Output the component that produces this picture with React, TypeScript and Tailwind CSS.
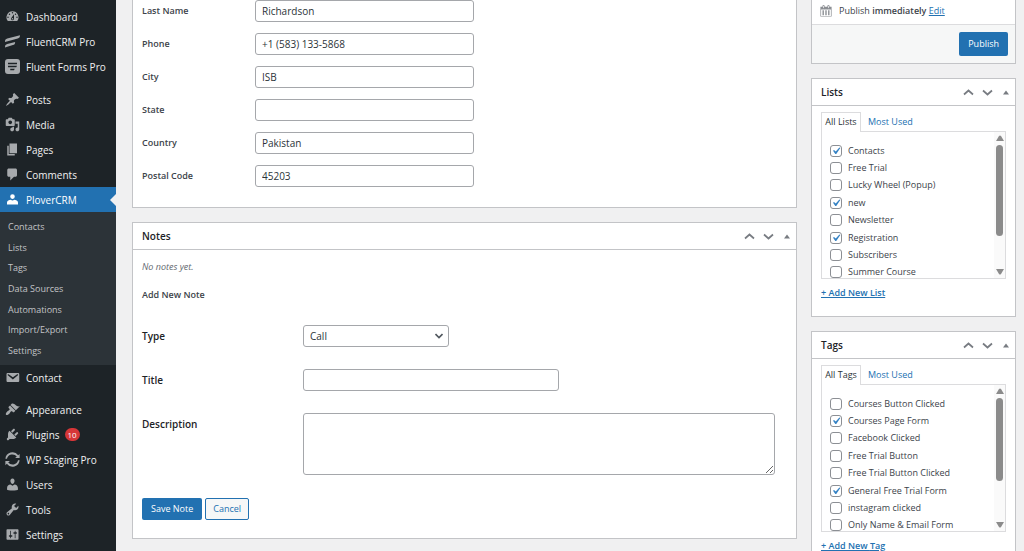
import React, { useState } from 'react';

const icons = {
  dashboard:
    'M3.76 16h12.48A7.998 7.998 0 0 0 10 3a7.998 7.998 0 0 0-6.24 13zM10 4c.55 0 1 .45 1 1s-.45 1-1 1-1-.45-1-1 .45-1 1-1zM6 6c.55 0 1 .45 1 1s-.45 1-1 1-1-.45-1-1 .45-1 1-1zm8 0c.55 0 1 .45 1 1s-.45 1-1 1-1-.45-1-1 .45-1 1-1zm-5.37 5.55L12 7v6c0 1.1-.9 2-2 2s-2-.9-2-2c0-.57.24-1.08.63-1.45zM4 10c.55 0 1 .45 1 1s-.45 1-1 1-1-.45-1-1 .45-1 1-1zm12 0c.55 0 1 .45 1 1s-.45 1-1 1-1-.45-1-1 .45-1 1-1zm-5 3c0-.55-.45-1-1-1s-1 .45-1 1 .45 1 1 1 1-.45 1-1z',
  fluentCrm: 'M0 10C0 7.6 1 6.6 3 6L20 1.5c0 2.600-1 3.800-3 4.400L0 10.500zM0 17.500c0-2.500 1-3.500 3-4.100L13.500 10.500c0 2.600-1 3.700-3 4.300L0 18z',
  fluentForms:
    'M4 0h12a4 4 0 0 1 4 4v12a4 4 0 0 1-4 4H4a4 4 0 0 1-4-4V4a4 4 0 0 1 4-4zM4 5v2h12V5zM4 9v2h11l1-2zM7 13v2h5l1-2z',
  posts:
    'M10.44 3.02l1.82-1.82 6.36 6.35-1.83 1.82c-1.05-.68-2.48-.57-3.41.36l-.75.75c-.92.93-1.04 2.35-.35 3.41l-1.83 1.82-2.41-2.41-2.8 2.79c-.42.42-3.38 2.71-3.8 2.29s1.86-3.39 2.28-3.81l2.79-2.79L4.1 9.36l1.83-1.82c1.05.69 2.48.57 3.4-.36l.75-.75c.93-.92 1.05-2.35.36-3.41z',
  media:
    'M13 11V4c0-.55-.45-1-1-1h-1.670L9 1H5L3.670 3H2c-.55 0-1 .45-1 1v7c0 .55.45 1 1 1h10c.55 0 1-.45 1-1zM7 4.500c1.380 0 2.500 1.120 2.500 2.500S8.380 9.500 7 9.500 4.500 8.380 4.500 7 5.620 4.500 7 4.500zM14 6h5v10.500c0 1.380-1.120 2.500-2.500 2.500S14 17.880 14 16.500s1.120-2.500 2.500-2.500c.17 0 .34.02.5.05V9h-3V6zm-4 8.050V13h2v3.500c0 1.380-1.120 2.500-2.500 2.500S7 17.880 7 16.500 8.120 14 9.500 14c.17 0 .34.02.5.05z',
  pages: 'M6 15V2h10v13H6zm-1 1h8v2H3V5h2v11z',
  comments: 'M5 2h9c1.100 0 2 .9 2 2v7c0 1.100-.9 2-2 2h-2l-5 5v-5H5c-1.100 0-2-.9-2-2V4c0-1.100.9-2 2-2z',
  plover: 'M10 0.500a4.200 4.200 0 1 1 0 8.400 4.200 4.200 0 0 1 0-8.400zM0 19v-3.500C0 12 4 10.500 7 10.500c.8.8 1.800 1.100 3 1.100s2.200-.3 3-1.100c3 0 7 1.500 7 5V19z',
  contact:
    'M3.870 4h13.250C18.370 4 19 4.590 19 5.790v8.420c0 1.190-.63 1.790-1.880 1.790H3.870c-1.250 0-1.880-.6-1.880-1.790V5.790c0-1.200.63-1.790 1.880-1.790zm6.620 8.600l6.740-5.530c.24-.2.43-.66.13-1.070-.29-.41-.82-.42-1.170-.17l-5.700 3.860L4.800 5.830c-.35-.25-.88-.24-1.170.17-.3.41-.11.87.13 1.070z',
  appearance:
    'M14.480 11.060L7.410 3.990l1.500-1.500c.5-.56 2.300-.47 3.510.32 1.210.8 1.430 1.280 2.910 2.100 1.180.64 2.450 1.260 4.450.85zm-.71.71L6.700 4.700 4.930 6.470c-.39.39-.39 1.020 0 1.410l1.060 1.060c.39.39.39 1.030 0 1.420-.6.6-1.430 1.110-2.210 1.690-.35.26-.7.53-1.010.84C1.430 14.230.4 16.080 1.400 17.070c.99 1 2.840-.03 4.180-1.360.31-.31.58-.66.85-1.020.57-.78 1.080-1.610 1.690-2.210.39-.39 1.020-.39 1.410 0l1.060 1.060c.39.39 1.020.39 1.410 0z',
  plugins:
    'M13.110 4.360L9.870 7.600 8 5.730l3.240-3.240c.35-.34 1.050-.2 1.560.32.52.51.66 1.210.31 1.550zm-8 1.770l.91-1.120 9.010 9.010-1.190.84c-.71.71-2.630 1.160-3.820 1.160H6.140L4.900 17.260c-.59.59-1.540.59-2.120 0-.59-.58-.59-1.530 0-2.120l1.240-1.240v-3.880c0-1.130.4-3.190 1.090-3.890zm7.260 3.970l3.240-3.240c.34-.35 1.040-.21 1.550.31.52.51.66 1.210.31 1.550l-3.240 3.250z',
  staging:
    'M0.500 9A9.500 9.500 0 0 1 17.600 4.200L19.500 2.500V8h-6l2.200-2A7.500 7.500 0 0 0 2.600 9zM19.500 11A9.500 9.500 0 0 1 2.400 15.800L.5 17.500V12h6l-2.200 2A7.500 7.500 0 0 0 17.400 11z',
  users:
    'M10 9.250c-2.270 0-2.730-3.440-2.730-3.440C7 4.020 7.820 2 9.970 2c2.160 0 2.980 2.020 2.710 3.810 0 0-.41 3.440-2.680 3.440zm0 2.570L12.720 10c2.390 0 4.520 2.330 4.520 4.530v2.490s-3.650 1.130-7.240 1.130c-3.650 0-7.240-1.130-7.240-1.130v-2.490c0-2.250 1.940-4.480 4.470-4.480z',
  tools:
    'M16.680 9.770c-1.340 1.340-3.300 1.670-4.950.99l-5.410 6.520c-.99.99-2.590.99-3.580 0s-.99-2.590 0-3.570l6.520-5.420c-.68-1.650-.35-3.610.99-4.950 1.280-1.280 3.120-1.620 4.720-1.060l-2.890 2.890 2.820 2.820 2.860-2.870c.53 1.580.18 3.390-1.080 4.650zM3.810 16.210c.4.39 1.040.39 1.430 0 .4-.4.4-1.040 0-1.430-.39-.4-1.030-.4-1.430 0-.39.39-.39 1.030 0 1.430z',
  settings:
    'M18 16V4c0-.55-.45-1-1-1H3c-.55 0-1 .45-1 1v12c0 .55.45 1 1 1h14c.55 0 1-.45 1-1zM8 11h1c.55 0 1 .45 1 1s-.45 1-1 1H8v1.500c0 .28-.22.5-.5.5s-.5-.22-.5-.5V13H6c-.55 0-1-.45-1-1s.45-1 1-1h1V5.500c0-.28.22-.5.5-.5s.5.22.5.5V11zm5-2h-1c-.55 0-1-.45-1-1s.45-1 1-1h1V5.500c0-.28.22-.5.5-.5s.5.22.5.5V7h1c.55 0 1 .45 1 1s-.45 1-1 1h-1v5.500c0 .28-.22.5-.5.5s-.5-.22-.5-.5V9z',
  calendar:
    'M15 4h3v14H2V4h3V3c0-.83.67-1.500 1.500-1.500S8 2.170 8 3v1h4V3c0-.83.67-1.500 1.500-1.500S15 2.170 15 3v1zM6 3v2.500c0 .28.22.5.5.5s.5-.22.5-.5V3c0-.28-.22-.5-.5-.5S6 2.720 6 3zm7 0v2.500c0 .28.22.5.5.5s.5-.22.5-.5V3c0-.28-.22-.5-.5-.5s-.5.22-.5.5zm4 14V8H3v9h14zM7 16V9H5v7h2zm4 0V9H9v7h2zm4 0V9h-2v7h2z',
  check: 'M14.830 4.890l1.340.94-5.810 8.380H9.020L5.780 9.670l1.340-1.250 2.570 2.400z',
};

type IconName = keyof typeof icons;

const Icon = ({ name, className }: { name: IconName; className?: string }) => (
  <svg viewBox="0 0 20 20" fill="currentColor" fillRule="evenodd" aria-hidden="true" className={className}>
    <path d={icons[name]} />
  </svg>
);

type MenuEntry = { label: string; icon: IconName; badge?: string };

const topMenu: MenuEntry[] = [
  { label: 'Dashboard', icon: 'dashboard' },
  { label: 'FluentCRM Pro', icon: 'fluentCrm' },
  { label: 'Fluent Forms Pro', icon: 'fluentForms' },
];

const contentMenu: MenuEntry[] = [
  { label: 'Posts', icon: 'posts' },
  { label: 'Media', icon: 'media' },
  { label: 'Pages', icon: 'pages' },
  { label: 'Comments', icon: 'comments' },
];

const adminMenu: MenuEntry[] = [
  { label: 'Appearance', icon: 'appearance' },
  { label: 'Plugins', icon: 'plugins', badge: '10' },
  { label: 'WP Staging Pro', icon: 'staging' },
  { label: 'Users', icon: 'users' },
  { label: 'Tools', icon: 'tools' },
  { label: 'Settings', icon: 'settings' },
];

const subMenu = ['Contacts', 'Lists', 'Tags', 'Data Sources', 'Automations', 'Import/Export', 'Settings'];

const contactFields = [
  { id: 'last_name', label: 'Last Name', value: 'Richardson' },
  { id: 'phone', label: 'Phone', value: '+1 (583) 133-5868' },
  { id: 'city', label: 'City', value: 'ISB' },
  { id: 'state', label: 'State', value: '' },
  { id: 'country', label: 'Country', value: 'Pakistan' },
  { id: 'postal_code', label: 'Postal Code', value: '45203' },
];

const lists = ['Contacts', 'Free Trial', 'Lucky Wheel (Popup)', 'new', 'Newsletter', 'Registration', 'Subscribers', 'Summer Course'];

const tags = [
  'Courses Button Clicked',
  'Courses Page Form',
  'Facebook Clicked',
  'Free Trial Button',
  'Free Trial Button Clicked',
  'General Free Trial Form',
  'instagram clicked',
  'Only Name & Email Form',
];

const MenuItem = ({ item }: { item: MenuEntry }) => (
  <li>
    <a href="#" className="flex h-[25px] items-center gap-1.5 pl-[5px] text-[#f0f0f1]">
      <Icon name={item.icon} className="size-[15px] shrink-0 text-[#a7aaad]" />
      <span>{item.label}</span>
      {item.badge && (
        <span className="-ml-px flex h-[13px] w-[15px] items-center justify-center rounded-full bg-[#d63638] text-[8px] text-white">
          {item.badge}
        </span>
      )}
    </a>
  </li>
);

const Sidebar = () => (
  <nav className="w-[116px] shrink-0 bg-[#1d2327] pt-1 text-[10px]">
    <ul>
      {topMenu.map((item) => (
        <MenuItem key={item.label} item={item} />
      ))}
    </ul>
    <ul className="pt-2">
      {contentMenu.map((item) => (
        <MenuItem key={item.label} item={item} />
      ))}
      <li>
        <a href="#" className="relative flex h-[25px] items-center gap-1.5 bg-[#2271b1] pl-[5px] text-white">
          <Icon name="plover" className="size-[15px] shrink-0 p-0.5" />
          <span>PloverCRM</span>
          <span className="absolute top-1/2 right-0 -translate-y-1/2 border-y-6 border-r-6 border-y-transparent border-r-[#f0f0f1]" />
        </a>
        <ul className="grid h-[153px] auto-rows-fr bg-[#2c3338] pt-[5px] pb-1 text-[9px]">
          {subMenu.map((label) => (
            <li key={label} className="flex items-center pl-2">
              <a href="#" className="text-[#c3c4c7]">
                {label}
              </a>
            </li>
          ))}
        </ul>
      </li>
      <MenuItem item={{ label: 'Contact', icon: 'contact' }} />
    </ul>
    <ul className="pt-[7px]">
      {adminMenu.map((item) => (
        <MenuItem key={item.label} item={item} />
      ))}
    </ul>
  </nav>
);

const Panel = ({ title, children }: { title: string; children: React.ReactNode }) => (
  <section className="border border-[#c3c4c7] bg-white">
    <header className="flex h-[27px] items-center justify-between border-b border-[#c3c4c7] pr-1.5 pl-[9px]">
      <h2 className="text-[10px] font-semibold text-[#1d2327]">{title}</h2>
      <div className="flex items-center gap-2 text-[#787c82]">
        <button type="button" aria-label="Move up">
          <svg viewBox="0 0 11 7" className="h-[7px] w-[11px]" fill="none" stroke="currentColor" strokeWidth="1.7">
            <path d="M1 5.500l4.500-4L10 5.500" />
          </svg>
        </button>
        <button type="button" aria-label="Move down">
          <svg viewBox="0 0 11 7" className="h-[7px] w-[11px]" fill="none" stroke="currentColor" strokeWidth="1.7">
            <path d="M1 1.500l4.500 4L10 1.500" />
          </svg>
        </button>
        <button type="button" aria-label="Toggle panel" className="pl-0.5">
          <svg viewBox="0 0 6 5" className="h-[5px] w-1.5" fill="currentColor">
            <path d="M0 4.500l3-4 3 4z" />
          </svg>
        </button>
      </div>
    </header>
    {children}
  </section>
);

type TaxonomyProps = {
  title: string;
  singular: string;
  items: string[];
  initial: string[];
  thumbClass: string;
};

const TaxonomyPanel = ({ title, singular, items, initial, thumbClass }: TaxonomyProps) => {
  const [selected, setSelected] = useState(initial);

  const toggle = (item: string) => {
    setSelected(selected.includes(item) ? selected.filter((s) => s !== item) : [...selected, item]);
  };

  return (
    <Panel title={title}>
      <div className="px-[9px] pt-1.5 pb-4">
        <div className="flex h-[19px]">
          <button type="button" className="relative -mb-px w-10 border border-b-0 border-[#dcdcde] bg-white pb-0.5 text-[#2c3338]">
            All {title}
          </button>
          <button type="button" className="px-[7px] text-[#2271b1]">
            Most Used
          </button>
        </div>
        <div className="flex h-[148px] overflow-hidden border border-[#dcdcde]">
          <ul className="grid h-[149px] flex-1 auto-rows-fr pt-2.5 pl-2">
            {items.map((item) => (
              <li key={item} className="flex items-center">
                <label className="flex items-center gap-1.5 whitespace-nowrap">
                  <span className="relative flex size-3">
                    <input
                      type="checkbox"
                      checked={selected.includes(item)}
                      onChange={() => toggle(item)}
                      className="size-3 appearance-none rounded-[3px] border border-[#8c8f94] bg-white"
                    />
                    {selected.includes(item) && (
                      <Icon name="check" className="pointer-events-none absolute -inset-px size-3.5 text-[#3582c4]" />
                    )}
                  </span>
                  {item}
                </label>
              </li>
            ))}
          </ul>
          <div className="flex w-[11px] flex-col items-center bg-[#fafafa] py-[3px] text-[#8b8b8b]">
            <svg viewBox="0 0 8 6" className="h-1.5 w-2 shrink-0" fill="currentColor">
              <path d="M0 6l3-5q1-1 2 0l3 5z" />
            </svg>
            <div className={thumbClass} />
            <svg viewBox="0 0 8 6" className="mt-auto h-1.5 w-2 shrink-0" fill="currentColor">
              <path d="M0 0l3 5q1 1 2 0l3-5z" />
            </svg>
          </div>
        </div>
        <a href="#" className="mt-[7px] block font-semibold text-[#2271b1] underline">
          + Add New {singular}
        </a>
      </div>
    </Panel>
  );
};

const fieldClass = 'h-[22px] rounded-[3px] border border-[#a5a7ab] bg-white px-1.5 text-[10px] text-[#2c3338]';
const primaryButton = 'rounded-xs bg-[#2271b1] px-[9px] text-white';

const App: React.FC = () => {
  const [values, setValues] = useState<Record<string, string>>(
    Object.fromEntries(contactFields.map((field) => [field.id, field.value]))
  );

  return (
    <div className="flex h-screen overflow-hidden bg-[#f0f0f1] font-['Open_Sans','Noto_Sans',sans-serif] text-[9px] leading-[14px] text-[#3c434a]">
      <Sidebar />

      <main className="flex min-w-0 flex-1 items-start gap-3.5 pr-2 pl-4">
        <div className="min-w-0 flex-1">
          {/* Contact details */}
          <section className="flex flex-col gap-[11px] border border-t-0 border-[#c3c4c7] bg-white px-[9px] pb-5">
            {contactFields.map((field) => (
              <div key={field.id} className="flex items-center">
                <label htmlFor={field.id} className="w-[113px] font-semibold">
                  {field.label}
                </label>
                <input
                  id={field.id}
                  value={values[field.id]}
                  onChange={(e) => setValues({ ...values, [field.id]: e.target.value })}
                  className={`${fieldClass} w-[219px]`}
                />
              </div>
            ))}
          </section>

          {/* Notes */}
          <div className="mt-3.5">
            <Panel title="Notes">
              <div className="px-[9px] pt-2.5 pb-[18px]">
                <p className="text-[#646970] italic">No notes yet.</p>
                <h3 className="mt-3.5 font-semibold">Add New Note</h3>
                <div className="mt-[23px] flex flex-col gap-[22px] text-[10px] font-semibold text-[#1d2327]">
                  <div className="flex items-center">
                    <label htmlFor="note_type" className="w-[161px]">
                      Type
                    </label>
                    <div className="relative flex font-normal">
                      <select id="note_type" className={`${fieldClass} w-[146px] appearance-none`}>
                        <option>Call</option>
                        <option>Email</option>
                        <option>Meeting</option>
                      </select>
                      <svg
                        viewBox="0 0 8 6"
                        className="pointer-events-none absolute top-2 right-1.5 h-1.5 w-2"
                        fill="none"
                        stroke="#50575e"
                        strokeWidth="1.6"
                      >
                        <path d="M.5 1L4 4.500 7.500 1" />
                      </svg>
                    </div>
                  </div>
                  <div className="flex items-center">
                    <label htmlFor="note_title" className="w-[161px]">
                      Title
                    </label>
                    <input id="note_title" className={`${fieldClass} w-64 font-normal`} />
                  </div>
                  <div className="flex items-start">
                    <label htmlFor="note_description" className="w-[161px] shrink-0 pt-1">
                      Description
                    </label>
                    <textarea
                      id="note_description"
                      className="mr-3 h-[62px] min-w-0 flex-1 rounded-[3px] border border-[#a5a7ab] bg-white p-1.5 font-normal"
                    />
                  </div>
                </div>
                <div className="mt-[23px] flex gap-[3px]">
                  <button type="button" className={`${primaryButton} h-[22px]`}>
                    Save Note
                  </button>
                  <button type="button" className="h-[22px] rounded-xs border border-[#2271b1] bg-[#f6f7f7] px-[7px] text-[#2271b1]">
                    Cancel
                  </button>
                </div>
              </div>
            </Panel>
          </div>
        </div>

        <aside className="flex w-[205px] shrink-0 flex-col gap-3.5">
          {/* Publish box */}
          <section className="border border-t-0 border-[#c3c4c7] bg-white">
            <div className="flex h-6 items-center gap-1.5 pb-0.5 pl-[7px]">
              <Icon name="calendar" className="size-[14px] text-[#8c8f94]" />
              <span>
                Publish <b className="font-semibold">immediately</b>{' '}
                <a href="#" className="text-[#2271b1] underline">
                  Edit
                </a>
              </span>
            </div>
            <div className="flex justify-end border-t border-[#dcdcde] bg-[#f6f7f7] px-[7px] py-[7px]">
              <button type="button" className={`${primaryButton} h-6`}>
                Publish
              </button>
            </div>
          </section>

          <TaxonomyPanel
            title="Lists"
            singular="List"
            items={lists}
            initial={['Contacts', 'new', 'Registration']}
            thumbClass="mt-1 h-[91px] w-[7px] rounded-full bg-[#8b8b8b]"
          />
          <TaxonomyPanel
            title="Tags"
            singular="Tag"
            items={tags}
            initial={['Courses Page Form', 'General Free Trial Form']}
            thumbClass="mt-1 h-[83px] w-[7px] rounded-full bg-[#8b8b8b]"
          />
        </aside>
      </main>
    </div>
  );
};

export default App;
